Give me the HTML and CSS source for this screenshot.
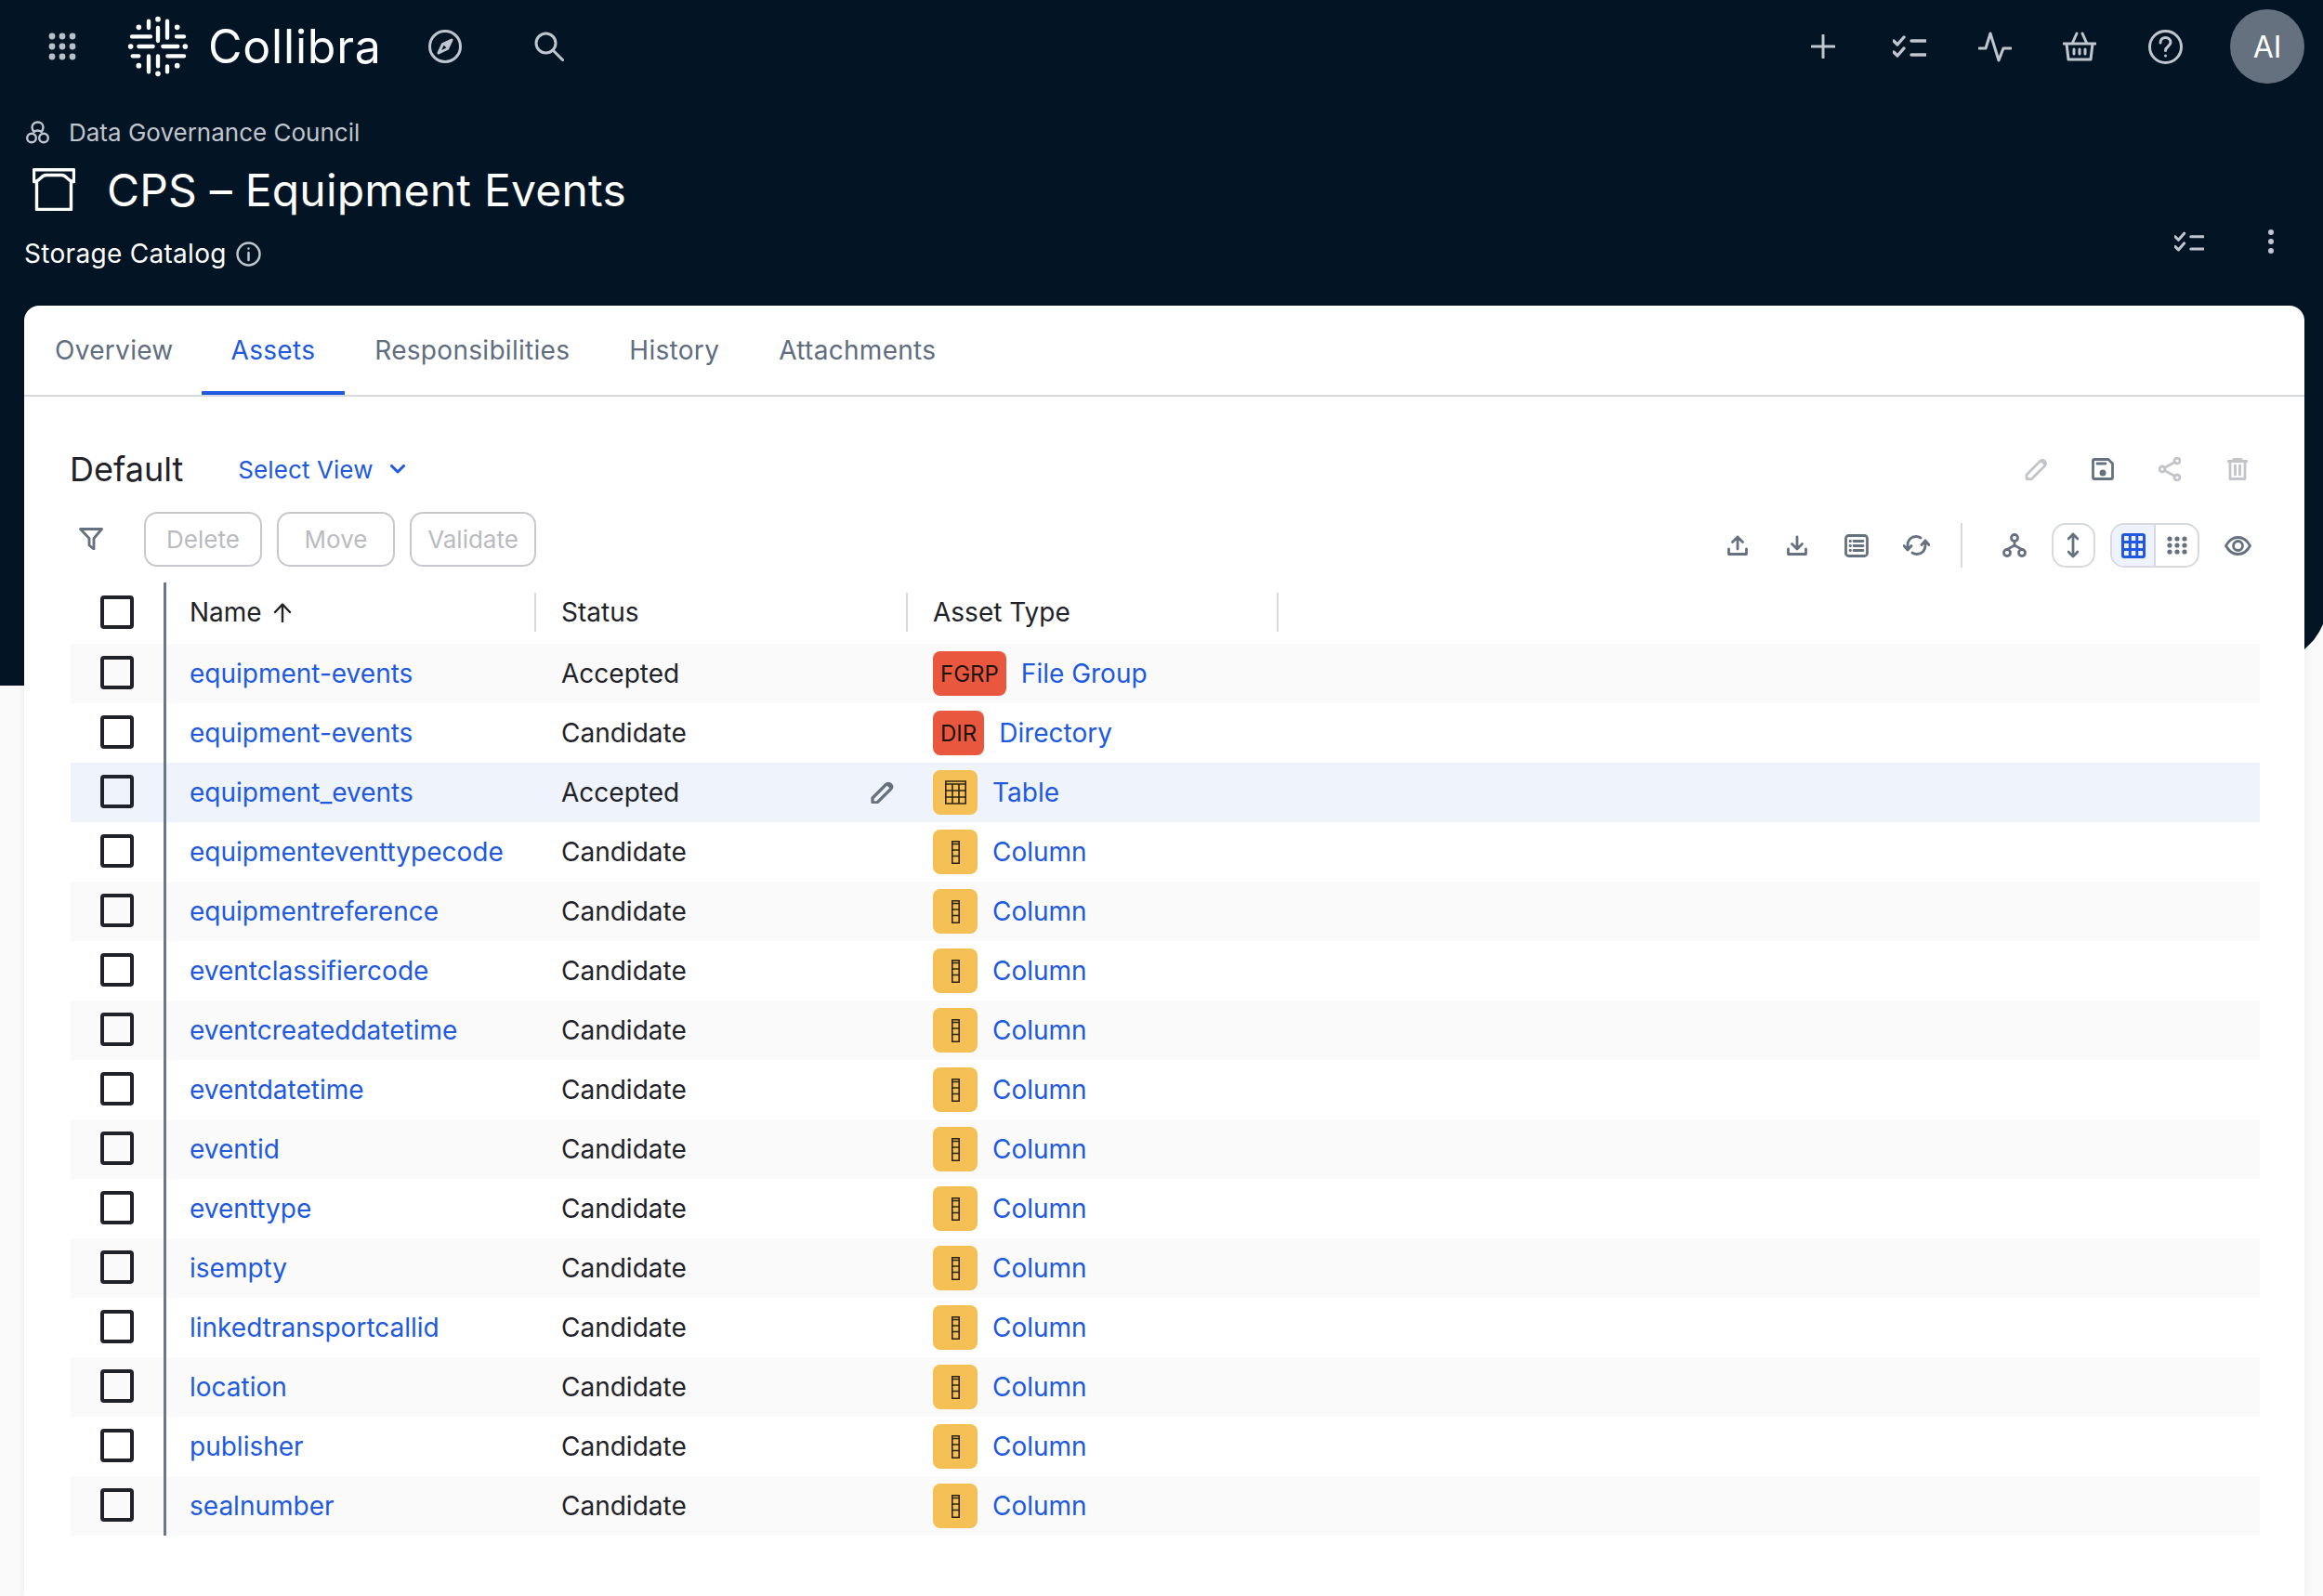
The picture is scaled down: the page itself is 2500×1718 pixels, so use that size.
FILE: index.html
```html
<!DOCTYPE html>
<html lang="en">
<head>
	<meta charset="utf-8"/>
	<title>CPS – Equipment Events</title>
	<link rel="stylesheet" href="styles.css">
</head>
<body>
	<svg class="sprite" width="0" height="0">
		<symbol id="i-check" viewBox="0 0 36 25"><path d="M1 6l4 4 7-8M1 18l4 4 7-8M20 6h15M20 21h15"/></symbol>
		<symbol id="i-pencil" viewBox="0 0 25 24"><path d="M2 22.500V18L16.500 3.500c1.500-1.500 3.500-1.500 5 0s1.500 3.500 0 5L7 23z"/><path class="fill" d="M16.500 3.500c1.500-1.500 3.500-1.500 5 0s1.500 3.500 0 5z"/></symbol>
		<symbol id="i-col" viewBox="0 0 9 25"><path d="M.8.8h7.400v23.400H.8zM.8 3.500h7.400M.8 10h7.400M.8 16.500h7.400"/></symbol>
	</svg>
	<div class="backdrop"></div>

	<header class="hero">
		<div class="topbar">
			<svg class="nav-grid" viewBox="0 0 30 30"><circle cx="4" cy="4" r="3.400"/><circle cx="15" cy="4" r="3.400"/><circle cx="26" cy="4" r="3.400"/><circle cx="4" cy="15" r="3.400"/><circle cx="15" cy="15" r="3.400"/><circle cx="26" cy="15" r="3.400"/><circle cx="4" cy="26" r="3.400"/><circle cx="15" cy="26" r="3.400"/><circle cx="26" cy="26" r="3.400"/></svg>
			<svg class="logo" viewBox="0 0 240 240"><path d="M36 88h60M180 88h24M58 120h46M136 120h48M38 151h20M151 151h53M90 38v22M120 60v42M150 38v54M90 151v51M120 151v33M150 184v18"/><path class="dots" d="M58 58h.01M182 58h.01M58 182h.01M182 182h.01M120 32h.01M120 208h.01M32 120h.01M208 120h.01"/></svg>
			<span class="wordmark">Collibra</span>
			<svg class="ic nav-compass" viewBox="0 0 36 36"><circle cx="18" cy="18" r="16.500"/><path d="M25 11l-4.500 9.500L11 25l4.500-9.500z"/><path class="fill" d="M25 11l-4.500 9.500-5-5z"/></svg>
			<svg class="ic nav-search" viewBox="0 0 32 32"><circle cx="12.500" cy="12.500" r="10.500"/><path d="M20 20l10.500 10.500"/></svg>
			<div class="nav-right">
				<svg class="ic nav-plus" viewBox="0 0 26 26"><path d="M13 1v24M1 13h24"/></svg>
				<svg class="ic nav-check"><use href="#i-check"/></svg>
				<svg class="ic nav-pulse" viewBox="0 0 36 33"><path d="M1 18h7L13 2l9 29 5-13h8"/></svg>
				<svg class="ic nav-basket" viewBox="0 0 36 32"><path d="M1 13h34M4 13l2 17h24l2-17M10 13l5-11M26 13L21 2M12 19v5M18 19v5M24 19v5"/></svg>
				<svg class="ic nav-help" viewBox="0 0 37 37"><circle cx="18.500" cy="18.500" r="17"/><path d="M13 14c0-3.500 2.500-5.500 5.500-5.500s5.500 2 5.500 5c0 4.500-5.500 4.500-5.500 9"/><path d="M18.500 28h.01"/></svg>
				<div class="avatar">AI</div>
			</div>
		</div>

		<div class="crumb">
			<svg class="ic crumb-ic" viewBox="0 0 25 25"><path d="M12.500 1.500c3.500 0 6 2.500 6 5.500 0 2-1 3.500-2 5-1.500-1-2.500-1.500-4-1.500s-2.500.5-4 1.500c-1-1.500-2-3-2-5 0-3 2.500-5.500 6-5.500z"/><circle cx="6" cy="18.500" r="4.800"/><circle cx="19" cy="18.500" r="4.800"/></svg>
			<span>Data Governance Council</span>
		</div>
		<div class="title-row">
			<svg class="ic title-ic" viewBox="0 0 46 46"><path d="M1.500 1.800h43v12.700h-3v30h-37v-30h-3zM1.500 14.500c7 0 7-7 13-7h17c6 0 6 7 13 7"/></svg>
			<h1>CPS – Equipment Events</h1>
		</div>
		<div class="sub-row">
			<span class="sub-label">Storage Catalog</span>
			<svg class="ic sub-info" viewBox="0 0 27 27"><circle cx="13.500" cy="13.500" r="12"/><path d="M13.500 12v8M13.500 7.500h.01"/></svg>
			<div class="sub-actions">
				<svg class="ic sub-check"><use href="#i-check"/></svg>
				<svg class="sub-dots" viewBox="0 0 6 26"><circle cx="3" cy="3" r="3"/><circle cx="3" cy="13" r="3"/><circle cx="3" cy="23" r="3"/></svg>
			</div>
		</div>
	</header>

	<main class="card">
		<nav class="tabs">
			<a class="tab">Overview</a>
			<a class="tab active">Assets</a>
			<a class="tab">Responsibilities</a>
			<a class="tab">History</a>
			<a class="tab">Attachments</a>
		</nav>

		<div class="view-row">
			<h2>Default</h2>
			<a class="select-view">Select View
				<svg class="ic chevron" viewBox="0 0 16 10"><path d="M1.500 1.500L8 8l6.500-6.500"/></svg>
			</a>
			<div class="view-actions">
				<svg class="tool off t-pencil"><use href="#i-pencil"/></svg>
				<svg class="tool t-save" viewBox="0 0 24 24"><path d="M1.500 3q0-1.500 1.500-1.500h15l4.500 4.500v15q0 1.500-1.500 1.500H3q-1.500 0-1.500-1.500zM6 6h9"/><circle class="fill" cx="12" cy="16" r="3.500"/></svg>
				<svg class="tool off t-share" viewBox="0 0 24 26"><circle cx="20" cy="4" r="3"/><circle cx="4" cy="13" r="3"/><circle cx="20" cy="22" r="3"/><path d="M17.500 5.500l-11 6M6.500 14.500l11 6"/></svg>
				<svg class="tool off t-trash" viewBox="0 0 22 24"><path d="M1 3.500h20M7 3.500V1.500h8v2M3 3.500v19h16v-19M8.500 8v10M13.500 8v10"/></svg>
			</div>
		</div>

		<div class="action-row">
			<svg class="tool t-filter" viewBox="0 0 26 24"><path d="M1.500 1.500h23L16 11.500v11.500l-5-4v-7.500z"/></svg>
			<button class="btn" type="button">Delete</button>
			<button class="btn" type="button">Move</button>
			<button class="btn btn-wide" type="button">Validate</button>
			<div class="table-tools">
				<svg class="tool t-22" viewBox="0 0 22 22"><path d="M1.500 15v5.500h19V15M11 15V2M5.500 7.500L11 2l5.500 5.500"/></svg>
				<svg class="tool t-22 tg" viewBox="0 0 22 22"><path d="M1.500 15v5.500h19V15M11 2v13M5.500 9.500L11 15l5.500-5.500"/></svg>
				<svg class="tool t-list" viewBox="0 0 26 25"><rect x="1.500" y="1.500" width="23" height="22" rx="3"/><path d="M10 7.500h10M10 12.500h10M10 17.500h10M6 7.500h.5M6 12.500h.5M6 17.500h.5"/></svg>
				<svg class="tool t-sync" viewBox="0 0 29 22"><path d="M5 16V11C5 5 9 1.500 14 1.500c2 0 3.500.5 5 1.500M1 11.500L5 16l4-4.500M24 6v5c0 6-4 9.500-9 9.500-2 0-3.500-.5-5-1.500M20 10.500L24 6l4 4.500"/></svg>
				<span class="tool-sep"></span>
				<svg class="tool t-tree" viewBox="0 0 26 26"><circle cx="13" cy="5" r="3.500"/><circle cx="5" cy="21" r="3.500"/><circle cx="21" cy="21" r="3.500"/><path d="M13 8.500v4.500M13 13l-8 4.500M13 13l8 4.500"/></svg>
				<span class="pill">
					<svg class="tool t-expand" viewBox="0 0 12 28"><path d="M6 2v24M1 7l5-5 5 5M1 21l5 5 5-5"/></svg>
				</span>
				<span class="seg">
					<span class="seg-cell on">
						<svg class="t-grid" viewBox="0 0 26 27"><path d="M1.500 3q0-1.500 1.500-1.500h20q1.500 0 1.500 1.500v21q0 1.500-1.500 1.500H3q-1.500 0-1.500-1.500zM1.500 9.500h23M1.500 17.500h23M9.300 1.500v24M16.800 1.500v24"/></svg>
					</span>
					<span class="seg-cell">
						<svg class="t-dots" viewBox="0 0 22 20"><circle cx="3" cy="3" r="2.600"/><circle cx="11" cy="3" r="2.600"/><circle cx="19" cy="3" r="2.600"/><circle cx="3" cy="10" r="2.600"/><circle cx="11" cy="10" r="2.600"/><circle cx="19" cy="10" r="2.600"/><circle cx="3" cy="17" r="2.600"/><circle cx="11" cy="17" r="2.600"/><circle cx="19" cy="17" r="2.600"/></svg>
					</span>
				</span>
				<svg class="tool t-eye" viewBox="0 0 29 21"><path d="M1.500 10.500C5 4 9.500 1.500 14.500 1.500S24 4 27.500 10.500C24 17 19.500 19.500 14.500 19.500S5 17 1.500 10.500z"/><circle cx="14.500" cy="10.500" r="5"/></svg>
			</div>
		</div>

		<div class="grid">
			<div class="row head">
				<div class="sel"><span class="box"></span></div>
				<div class="cell">Name
					<svg class="sort" viewBox="0 0 22 21"><path d="M11 20V2M3 10l8-8.500 8 8.500"/></svg>
				</div>
				<div class="cell">Status</div>
				<div class="cell last">Asset Type</div>
			</div>

			<div class="row stripe">
				<div class="sel"><span class="box"></span></div>
				<div class="cell"><a>equipment-events</a></div>
				<div class="cell">Accepted</div>
				<div class="cell"><span class="badge red">FGRP</span><a>File Group</a></div>
			</div>
			<div class="row">
				<div class="sel"><span class="box"></span></div>
				<div class="cell"><a>equipment-events</a></div>
				<div class="cell">Candidate</div>
				<div class="cell"><span class="badge red">DIR</span><a>Directory</a></div>
			</div>
			<div class="row hover">
				<div class="sel"><span class="box"></span></div>
				<div class="cell"><a>equipment_events</a></div>
				<div class="cell status-edit">Accepted <svg class="tool row-pencil"><use href="#i-pencil"/></svg></div>
				<div class="cell"><span class="badge yellow"><svg class="table-ic" viewBox="0 0 23 26"><path d="M.8 1h21.400v24H.8zM.8 4h21.400M.8 11h21.400M.8 18h21.400M8 4v21M15 4v21"/></svg></span><a>Table</a></div>
			</div>
			<div class="row">
				<div class="sel"><span class="box"></span></div>
				<div class="cell"><a>equipmenteventtypecode</a></div>
				<div class="cell">Candidate</div>
				<div class="cell"><span class="badge yellow"><svg class="col-ic"><use href="#i-col"/></svg></span><a>Column</a></div>
			</div>
			<div class="row stripe">
				<div class="sel"><span class="box"></span></div>
				<div class="cell"><a>equipmentreference</a></div>
				<div class="cell">Candidate</div>
				<div class="cell"><span class="badge yellow"><svg class="col-ic"><use href="#i-col"/></svg></span><a>Column</a></div>
			</div>
			<div class="row">
				<div class="sel"><span class="box"></span></div>
				<div class="cell"><a>eventclassifiercode</a></div>
				<div class="cell">Candidate</div>
				<div class="cell"><span class="badge yellow"><svg class="col-ic"><use href="#i-col"/></svg></span><a>Column</a></div>
			</div>
			<div class="row stripe">
				<div class="sel"><span class="box"></span></div>
				<div class="cell"><a>eventcreateddatetime</a></div>
				<div class="cell">Candidate</div>
				<div class="cell"><span class="badge yellow"><svg class="col-ic"><use href="#i-col"/></svg></span><a>Column</a></div>
			</div>
			<div class="row">
				<div class="sel"><span class="box"></span></div>
				<div class="cell"><a>eventdatetime</a></div>
				<div class="cell">Candidate</div>
				<div class="cell"><span class="badge yellow"><svg class="col-ic"><use href="#i-col"/></svg></span><a>Column</a></div>
			</div>
			<div class="row stripe">
				<div class="sel"><span class="box"></span></div>
				<div class="cell"><a>eventid</a></div>
				<div class="cell">Candidate</div>
				<div class="cell"><span class="badge yellow"><svg class="col-ic"><use href="#i-col"/></svg></span><a>Column</a></div>
			</div>
			<div class="row">
				<div class="sel"><span class="box"></span></div>
				<div class="cell"><a>eventtype</a></div>
				<div class="cell">Candidate</div>
				<div class="cell"><span class="badge yellow"><svg class="col-ic"><use href="#i-col"/></svg></span><a>Column</a></div>
			</div>
			<div class="row stripe">
				<div class="sel"><span class="box"></span></div>
				<div class="cell"><a>isempty</a></div>
				<div class="cell">Candidate</div>
				<div class="cell"><span class="badge yellow"><svg class="col-ic"><use href="#i-col"/></svg></span><a>Column</a></div>
			</div>
			<div class="row">
				<div class="sel"><span class="box"></span></div>
				<div class="cell"><a>linkedtransportcallid</a></div>
				<div class="cell">Candidate</div>
				<div class="cell"><span class="badge yellow"><svg class="col-ic"><use href="#i-col"/></svg></span><a>Column</a></div>
			</div>
			<div class="row stripe">
				<div class="sel"><span class="box"></span></div>
				<div class="cell"><a>location</a></div>
				<div class="cell">Candidate</div>
				<div class="cell"><span class="badge yellow"><svg class="col-ic"><use href="#i-col"/></svg></span><a>Column</a></div>
			</div>
			<div class="row">
				<div class="sel"><span class="box"></span></div>
				<div class="cell"><a>publisher</a></div>
				<div class="cell">Candidate</div>
				<div class="cell"><span class="badge yellow"><svg class="col-ic"><use href="#i-col"/></svg></span><a>Column</a></div>
			</div>
			<div class="row stripe">
				<div class="sel"><span class="box"></span></div>
				<div class="cell"><a>sealnumber</a></div>
				<div class="cell">Candidate</div>
				<div class="cell"><span class="badge yellow"><svg class="col-ic"><use href="#i-col"/></svg></span><a>Column</a></div>
			</div>
		</div>
	</main>
</body>
</html>
```

FILE: styles.css
```css
* {
	box-sizing: border-box;
}

html, body {
	margin: 0;
	height: 1718px;
	overflow: hidden;
}

body {
	position: relative;
	font-family: Inter, "Liberation Sans", sans-serif;
	font-size: 28px;
	color: #1f2228;
	background: #f9f9f9;
}

.sprite {
	position: absolute;
}

svg {
	display: block;
	flex: none;
}

/* dark band behind the header and the top of the card */
.backdrop {
	position: absolute;
	top: 0;
	left: 0;
	right: 0;
	height: 738px;
	background: #031525;
	clip-path: polygon(0 0, 100% 0, 100% 672px, 2496px 680px, 2490px 689px, 2480px 699px, 2470px 738px, 0 738px);
}

.hero {
	position: relative;
	height: 329px;
	padding: 0 20px 0 26px;
	color: #fff;
}

.ic {
	fill: none;
	stroke: #c0c5ce;
	stroke-width: 3;
	stroke-linecap: round;
	stroke-linejoin: round;
}

.fill {
	fill: currentColor;
	stroke: none;
}

.ic .fill {
	fill: #c0c5ce;
}

/* top navigation */
.topbar {
	display: flex;
	align-items: center;
	height: 100px;
}

.nav-grid {
	width: 30px;
	height: 30px;
	margin-left: 26px;
	fill: #b9bfc9;
}

.logo {
	width: 80px;
	height: 80px;
	margin-left: 48px;
	fill: none;
	stroke: #fff;
	stroke-width: 13;
	stroke-linecap: round;
}

.logo .dots {
	stroke-width: 17;
}

.wordmark {
	margin-left: 14px;
	width: 185px;
	font-size: 50px;
	letter-spacing: 0.8px;
	font-weight: 400;
}

.nav-compass {
	width: 36px;
	height: 36px;
	margin-left: 52px;
}

.nav-search {
	width: 32px;
	height: 32px;
	margin-left: 78px;
}

.nav-right {
	display: flex;
	align-items: center;
	margin-left: auto;
}

.nav-plus {
	width: 26px;
	height: 26px;
	margin-right: 62px;
}

.nav-check {
	width: 36px;
	height: 25px;
	margin-right: 56px;
	stroke-width: 3.400;
}

.nav-pulse {
	width: 36px;
	height: 33px;
	margin-right: 55px;
}

.nav-basket {
	width: 36px;
	height: 32px;
	margin-right: 56px;
}

.nav-help {
	width: 37px;
	height: 37px;
	margin-right: 51px;
}

.avatar {
	display: flex;
	align-items: center;
	justify-content: center;
	width: 80px;
	height: 80px;
	border-radius: 50%;
	background: #66717f;
	font-size: 32px;
}

/* breadcrumb, title, subtitle */
.crumb {
	display: flex;
	align-items: center;
	gap: 21px;
	height: 44px;
	margin-top: 20px;
	padding-left: 2px;
	font-size: 26px;
	color: #c0c5ce;
}

.crumb-ic {
	width: 25px;
	height: 25px;
	stroke-width: 2.400;
}

.title-row {
	display: flex;
	align-items: center;
	height: 72px;
	margin-top: 4px;
}

.title-ic {
	width: 46px;
	height: 46px;
	margin-left: 9px;
	stroke: #fff;
	stroke-width: 3.400;
}

h1 {
	margin: 0 0 0 34px;
	font-size: 48px;
	font-weight: 400;
	letter-spacing: 0.2px;
	white-space: nowrap;
}

.sub-row {
	display: flex;
	align-items: center;
	height: 40px;
	margin-top: 13px;
}

.sub-label {
	font-size: 28px;
	letter-spacing: 0.3px;
}

.sub-info {
	width: 27px;
	height: 27px;
	margin-left: 10px;
	stroke-width: 2.500;
}

.sub-actions {
	display: flex;
	align-items: center;
	margin-left: auto;
	margin-top: -26px;
}

.sub-check {
	width: 32px;
	height: 23px;
	margin-right: 69px;
	stroke-width: 3.400;
}

.sub-dots {
	width: 6px;
	height: 26px;
	margin-right: 33px;
	fill: #c0c5ce;
}

/* card */
.card {
	position: relative;
	height: 1389px;
	margin: 0 20px 0 26px;
	background: #fff;
	border-radius: 16px 16px 0 0;
	box-shadow: 0 0 8px rgba(0, 0, 0, 0.06);
}

.tabs {
	display: flex;
	height: 98px;
	border-bottom: 2px solid #d6d9e1;
}

.tab {
	display: flex;
	align-items: center;
	height: 96px;
	padding: 0 32px;
	font-size: 28px;
	letter-spacing: 0.3px;
	color: #5f6d80;
}

.tab:first-child {
	padding-left: 33px;
	padding-right: 30px;
}

.tab.active {
	color: #2059e0;
	border-bottom: 4px solid #2059e0;
	padding-top: 4px;
}

.view-row {
	display: flex;
	align-items: center;
	height: 60px;
	margin-top: 48px;
	padding: 0 49px;
}

h2 {
	margin: 0;
	font-size: 36px;
	font-weight: 400;
}

.select-view {
	display: flex;
	align-items: center;
	margin-left: 59px;
	font-size: 26px;
	letter-spacing: 0.1px;
	color: #2059e0;
}

.chevron {
	width: 16px;
	height: 10px;
	margin-left: 18px;
	stroke: #2059e0;
}

.view-actions {
	display: flex;
	align-items: center;
	margin-left: auto;
	margin-right: 12px;
}

.tool {
	fill: none;
	stroke: #66717f;
	color: #66717f;
	stroke-width: 2.800;
	stroke-linecap: round;
	stroke-linejoin: round;
}

.tool.off {
	stroke: #c2c4c9;
	color: #c2c4c9;
}

.t-pencil {
	width: 25px;
	height: 24px;
	margin-right: 47px;
}

.t-save {
	width: 24px;
	height: 24px;
	margin-right: 48px;
}

.t-share {
	width: 24px;
	height: 26px;
	margin-right: 50px;
}

.t-trash {
	width: 22px;
	height: 24px;
}

.action-row {
	display: flex;
	align-items: flex-start;
	height: 76px;
	margin-top: 16px;
	padding-left: 59px;
}

.t-filter {
	width: 26px;
	height: 24px;
	margin-top: 17px;
	margin-right: 44px;
}

.btn {
	width: 127px;
	height: 59px;
	margin-right: 16px;
	padding: 0;
	background: #fff;
	border: 2px solid #c7c9ce;
	border-radius: 14px;
	font: 26px Inter, "Liberation Sans", sans-serif;
	color: #b9bbc0;
}

.btn-wide {
	width: 136px;
}

.table-tools {
	display: flex;
	align-items: center;
	height: 48px;
	margin-top: 12px;
	margin-left: auto;
	margin-right: 57px;
}

.t-22 {
	width: 22px;
	height: 22px;
}

.tg {
	margin-left: 42px;
}

.t-list {
	width: 26px;
	height: 25px;
	margin-left: 40px;
}

.t-sync {
	width: 29px;
	height: 22px;
	margin-left: 37px;
}

.tool-sep {
	width: 2px;
	height: 48px;
	margin-left: 33px;
	background: #d6d9e1;
}

.t-tree {
	width: 26px;
	height: 26px;
	margin-left: 43px;
}

.pill {
	display: flex;
	align-items: center;
	justify-content: center;
	width: 47px;
	height: 48px;
	margin-left: 27px;
	border: 2px solid #d6d9e1;
	border-radius: 15px;
}

.t-expand {
	width: 12px;
	height: 28px;
}

.seg {
	display: flex;
	width: 96px;
	height: 48px;
	margin-left: 16.500px;
	border: 2px solid #d6d9e1;
	border-radius: 15px;
	overflow: hidden;
}

.seg-cell {
	display: flex;
	align-items: center;
	justify-content: center;
	flex: 1;
}

.seg-cell.on {
	background: #eef2fb;
	border-right: 2px solid #d6d9e1;
}

.t-grid {
	width: 26px;
	height: 27px;
	fill: none;
	stroke: #2059e0;
	stroke-width: 3;
}

.t-dots {
	width: 22px;
	height: 20px;
	fill: #66717f;
}

.t-eye {
	width: 29px;
	height: 21px;
	margin-left: 27px;
}

/* asset table */
.grid {
	margin: 0 48px 0 50px;
}

.row {
	display: flex;
	align-items: center;
	height: 64px;
}

.row.head {
	height: 66px;
}

.row.stripe {
	background: #fafafa;
}

.row.hover {
	background: #eff3fb;
}

.sel {
	display: flex;
	align-items: center;
	align-self: stretch;
	width: 103px;
	padding: 0 0 2px 32px;
	border-right: 3px solid #6b7686;
}

.box {
	width: 36px;
	height: 36px;
	border: 4px solid #1f2228;
	border-radius: 4px;
}

.cell {
	display: flex;
	align-items: center;
	width: 400px;
	height: 48px;
	padding-left: 25px;
	white-space: nowrap;
}

.cell a {
	color: #2059e0;
}

.head .cell {
	height: 42px;
	width: 398px;
	margin: 0 2px 2px 0;
	border-right: 2px solid #d6d9e1;
}

.head .cell.last {
	width: 397px;
}

.sort {
	width: 22px;
	height: 21px;
	margin-left: 11px;
	fill: none;
	stroke: #1f2228;
	stroke-width: 2.400;
	stroke-linecap: round;
	stroke-linejoin: round;
}

.status-edit {
	justify-content: space-between;
	padding-right: 17px;
}

.row-pencil {
	width: 25px;
	height: 24px;
	stroke-width: 3.200;
}

.badge {
	display: flex;
	align-items: center;
	justify-content: center;
	min-width: 48px;
	height: 48px;
	margin-right: 16px;
	padding: 0 8px;
	border-radius: 8px;
	font-size: 24px;
	color: #1c1410;
}

.badge.red {
	background: #ea573f;
}

.badge.yellow {
	background: #f4c055;
	padding: 0;
}

.table-ic {
	width: 23px;
	height: 26px;
	fill: none;
	stroke: #2b2414;
	stroke-width: 1.600;
}

.col-ic {
	width: 9px;
	height: 25px;
	fill: none;
	stroke: #2b2414;
	stroke-width: 1.600;
}
```
